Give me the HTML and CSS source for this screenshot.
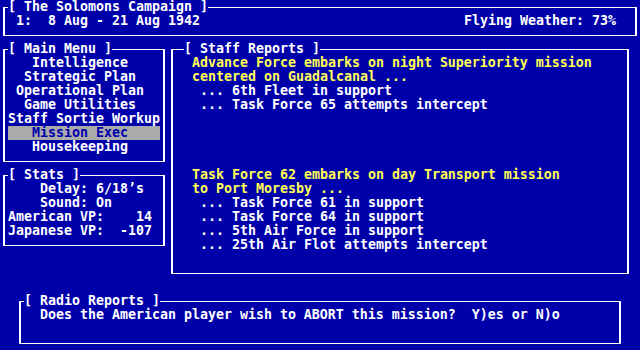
FILE: index.html
```html
<!DOCTYPE html>
<html>
<head>
<meta charset="utf-8">
<link rel="stylesheet" href="styles.css">
</head>
<body>
<div class="screen">
  <section class="box win-top">
    <div class="title">[ The Solomons Campaign ]</div>
    <div class="status">
      <span class="line"> 1:  8 Aug - 21 Aug 1942</span>
      <span class="line weather">Flying Weather: 73%</span>
    </div>
  </section>

  <section class="box win-menu">
    <div class="title">[ Main Menu ]</div>
    <div class="line">   Intelligence</div>
    <div class="line">  Strategic Plan</div>
    <div class="line"> Operational Plan</div>
    <div class="line">  Game Utilities</div>
    <div class="line">Staff Sortie Workup</div>
    <div class="line sel">   Mission Exec</div>
    <div class="line">   Housekeeping</div>
  </section>

  <section class="box win-stats">
    <div class="title">[ Stats ]</div>
    <div class="line">    Delay: 6/18’s</div>
    <div class="line">    Sound: On</div>
    <div class="line">American VP:    14</div>
    <div class="line">Japanese VP:  -107</div>
  </section>

  <section class="box win-staff">
    <div class="title indent">[ Staff Reports ]</div>
    <div class="report">
      <div class="line head">Advance Force embarks on night Superiority mission</div>
      <div class="line head">centered on Guadalcanal ...</div>
      <div class="line item">... 6th Fleet in support</div>
      <div class="line item">... Task Force 65 attempts intercept</div>
    </div>
    <div class="report">
      <div class="line head">Task Force 62 embarks on day Transport mission</div>
      <div class="line head">to Port Moresby ...</div>
      <div class="line item">... Task Force 61 in support</div>
      <div class="line item">... Task Force 64 in support</div>
      <div class="line item">... 5th Air Force in support</div>
      <div class="line item">... 25th Air Flot attempts intercept</div>
    </div>
  </section>

  <section class="box win-radio">
    <div class="title">[ Radio Reports ]</div>
    <div class="line msg">Does the American player wish to ABORT this mission?  Y)es or N)o</div>
  </section>
</div>
</body>
</html>
```
FILE: styles.css
```css
html, body {
  margin: 0;
  padding: 0;
}

body {
  background: #0000aa;
  color: #ffffff;
  font-family: "DejaVu Sans Mono", "Liberation Mono", monospace;
  font-weight: bold;
  font-size: 13.29px;
  line-height: 14px;
}

.screen {
  display: grid;
  grid-template-columns: repeat(80, 8px);
  grid-template-rows: repeat(25, 14px);
  width: 640px;
  height: 350px;
  overflow: hidden;
}

.box {
  margin: 7px 3px 6px;
  border-style: solid;
  border-color: #ffffff;
  border-width: 1px 2px;
  padding: 0 3px;
  min-width: 0;
  min-height: 0;
}

.win-top   { grid-column: 1 / 81;  grid-row: 1 / 4; }
.win-menu  { grid-column: 1 / 22;  grid-row: 4 / 13; }
.win-stats { grid-column: 1 / 22;  grid-row: 13 / 19; }
.win-staff { grid-column: 22 / 80; grid-row: 4 / 21; }
.win-radio { grid-column: 3 / 79;  grid-row: 22 / 26; }

.title {
  margin-top: -8px;
  height: 14px;
  width: max-content;
  background: #0000aa;
  white-space: pre;
}

.title.indent {
  margin-left: 8px;
}

.line {
  display: block;
  height: 14px;
  white-space: pre;
}

.status {
  display: flex;
  justify-content: space-between;
}

.weather {
  margin-right: 16px;
}

.sel {
  background: #aaaaaa;
  color: #0000aa;
}

.report {
  min-height: 112px;
}

.head {
  color: #ffff55;
  padding-left: 16px;
}

.item {
  padding-left: 24px;
}

.msg {
  padding-left: 16px;
}
```
